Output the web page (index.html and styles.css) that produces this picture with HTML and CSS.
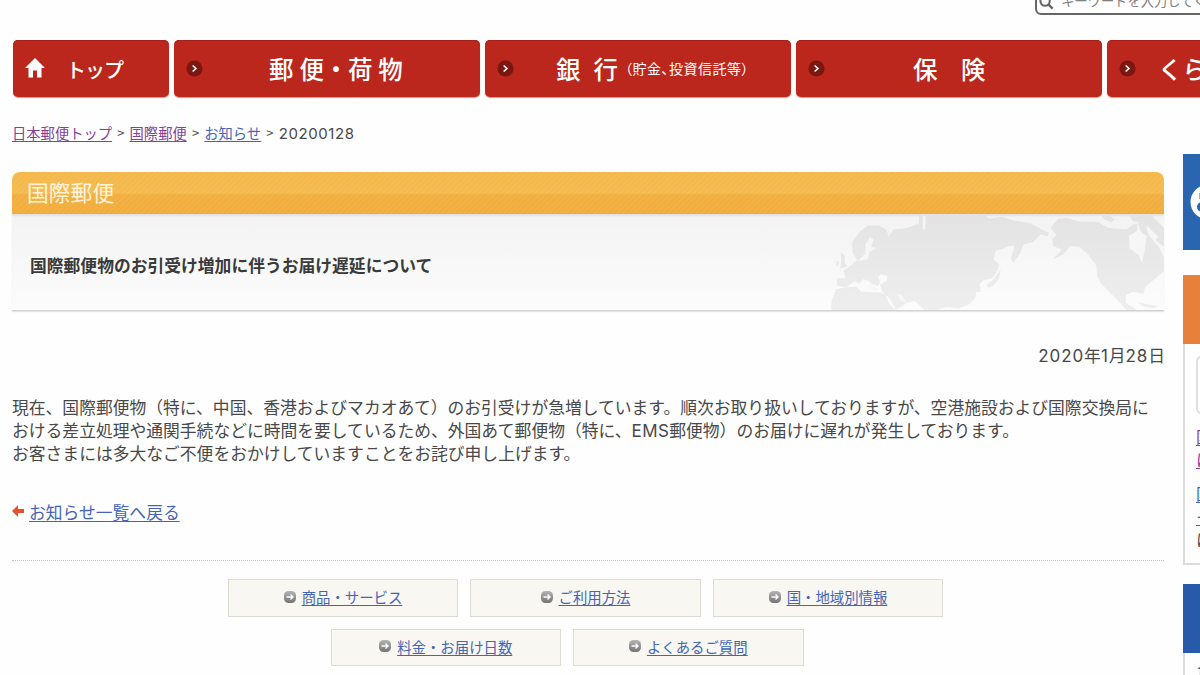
FILE: index.html
```
<!DOCTYPE html>
<html lang="ja">

<head>
    <meta charset="UTF-8">
    <title>国際郵便物のお引受け増加に伴うお届け遅延について</title>
    <link rel="stylesheet" href="styles.css">
</head>

<body>
    <svg class="defs" width="0" height="0">
        <defs>
            <linearGradient id="ball" x1="0" y1="0" x2="0" y2="1">
                <stop offset="0" stop-color="#b4b4b4" />
                <stop offset="1" stop-color="#747474" />
            </linearGradient>
            <linearGradient id="land" gradientUnits="userSpaceOnUse" x1="0" y1="193" x2="0" y2="483">
                <stop offset="0" stop-color="#e3e3e3" />
                <stop offset="1" stop-color="#eeeeee" />
            </linearGradient>
            <symbol id="chevron" viewBox="0 0 18 18">
                <circle cx="9" cy="9" r="8.5" fill="#7b1610" />
                <path d="M7 5.8L10.5 9L7 12.2" fill="none" stroke="#fff" stroke-width="1.7" />
            </symbol>
            <symbol id="arrow" viewBox="0 0 12 12">
                <rect width="12" height="12" rx="4.5" fill="url(#ball)" />
                <path d="M2.5 6H9M6.5 3.5L9 6L6.5 8.5" fill="none" stroke="#fff" stroke-width="1.4" />
            </symbol>
        </defs>
    </svg>

    <header class="header">
        <div class="search">
            <svg class="search-icon" viewBox="0 0 16 16">
                <circle cx="6.5" cy="6.5" r="5" fill="none" stroke="#666" stroke-width="2.2" />
                <path d="M10 10L14.5 14.5" stroke="#666" stroke-width="2.6" />
            </svg>
            <span>キーワードを入力してください</span>
        </div>
    </header>

    <nav class="nav">
        <a class="nav-item nav-home">
            <svg class="home-icon" viewBox="0 0 20 20">
                <path d="M10 0L20 10H16.5V19.5H12V12.5H8V19.5H3.5V10H0Z" fill="#fff" />
            </svg>
            <span>トップ</span>
        </a>
        <a class="nav-item nav-post">
            <svg class="chevron"><use href="#chevron" /></svg>
            <span class="nav-label">郵便・荷物</span>
        </a>
        <a class="nav-item nav-bank">
            <svg class="chevron"><use href="#chevron" /></svg>
            <span class="nav-label">銀行</span>
            <span class="nav-note">（貯金、投資信託等）</span>
        </a>
        <a class="nav-item nav-insurance">
            <svg class="chevron"><use href="#chevron" /></svg>
            <span class="nav-label">保険</span>
        </a>
        <a class="nav-item nav-life">
            <svg class="chevron"><use href="#chevron" /></svg>
            <span class="nav-label">くらし</span>
        </a>
    </nav>

    <div class="container">
        <main class="main">
            <div class="breadcrumb">
                <a class="visited">日本郵便トップ</a><i>&gt;</i><a class="visited">国際郵便</a><i>&gt;</i><a class="link">お知らせ</a><i>&gt;</i><span class="num">20200128</span>
            </div>

            <div class="category">国際郵便</div>
            <div class="title">
                <h1>国際郵便物のお引受け増加に伴うお届け遅延について</h1>
                <svg class="map" viewBox="95 193 997 290" preserveAspectRatio="none">
                    <g fill="url(#land)">
                        <path d="M358 193H550L570 207L605 201L640 212L695 222L722 238L748 250L744 260L722 255L700 278L672 285L662 310L640 342L634 325L645 290L628 290L605 300L588 304L582 330L598 345L594 362L578 386L550 394L540 405L543 428L530 428L528 445L510 465L480 478L440 475L415 483H375L345 455L320 463L290 483L268 445L250 430L242 405L262 396L264 382L245 374L235 385L243 396L235 412L218 404L206 394L190 390L180 402L165 396L140 414L113 410L113 388L138 386L132 364L155 348L172 333L160 310L158 278L180 248L205 228L240 228L262 242L268 262L282 240L320 236L358 222Z" />
                        <path d="M110 420L140 414L172 413L186 428L240 430L258 436L270 465L290 483H95L97 455Z" />
                        <path d="M752 235L775 208L800 205L840 216L895 217L925 235L980 240L1000 225L1030 215L1050 262L1078 295L1092 325V365L1063 390L1035 415L1030 435L1000 428L978 438L978 462L1000 475L1010 483H980L955 455L930 430L905 405L892 380L890 350L865 315L838 292L812 290L790 315L760 330L785 300L760 290L758 268L770 256Z" />
                        <path d="M900 193H925L945 210L935 218L912 208ZM985 193H1050L1092 235V292L1070 275L1055 250L1030 222L1000 215ZM124 308L137 318L136 340L144 352L122 358L126 335ZM112 334L120 338L116 350L110 348ZM603 360L598 388L582 408L566 416L562 405L580 392ZM1015 460L1040 466L1075 472L1060 478L1025 471Z" />
                    </g>
                    <path d="M212 262L222 270L215 293L232 296L210 308L205 330L176 334L198 312L198 285ZM370 197L378 202L377 238L370 238ZM207 400L220 405L236 425L225 428ZM292 435L306 438L324 462L305 456ZM1012 215L1022 245L1040 260L1034 305L1026 340L1016 318L988 295L988 258L1012 244ZM1040 225L1052 240L1075 262L1068 270L1048 252Z" fill="#f6f6f6" />
                </svg>
            </div>

            <p class="date"><span class="latin">2020</span>年<span class="latin">1</span>月<span class="latin">28</span>日</p>

            <p class="text">現在、国際郵便物（特に、中国、香港およびマカオあて）のお引受けが急増しています。順次お取り扱いしておりますが、空港施設および国際交換局に<br>おける差立処理や通関手続などに時間を要しているため、外国あて郵便物（特に、<span class="latin">EMS</span>郵便物）のお届けに遅れが発生しております。<br>お客さまには多大なご不便をおかけしていますことをお詫び申し上げます。</p>

            <div class="back">
                <svg class="back-icon" viewBox="0 0 12 12">
                    <path d="M0 6L6 0V4H12V8H6V12Z" fill="#e9502a" />
                </svg>
                <a class="link">お知らせ一覧へ戻る</a>
            </div>

            <div class="local-nav">
                <div class="local-row">
                    <div class="local-item"><svg><use href="#arrow" /></svg><a class="link">商品・サービス</a></div>
                    <div class="local-item"><svg><use href="#arrow" /></svg><a class="link">ご利用方法</a></div>
                    <div class="local-item"><svg><use href="#arrow" /></svg><a class="link">国・地域別情報</a></div>
                </div>
                <div class="local-row local-row-second">
                    <div class="local-item"><svg><use href="#arrow" /></svg><a class="link">料金・お届け日数</a></div>
                    <div class="local-item"><svg><use href="#arrow" /></svg><a class="link">よくあるご質問</a></div>
                </div>
            </div>
        </main>

        <aside class="side">
            <div class="banner">
                <svg viewBox="0 0 36 36">
                    <circle cx="18" cy="18" r="17.5" fill="#fff" />
                    <path d="M9.5 9H16V15H9.5Z" fill="#2b65b0" />
                    <circle cx="12" cy="23" r="5" fill="#2b65b0" />
                </svg>
            </div>
            <div class="side-box">
                <div class="side-head orange"></div>
                <div class="side-body">
                    <div class="side-button"></div>
                    <p><a class="visited">国<br>に</a></p>
                    <p><a class="link">国<br>そ</a><br>に</p>
                </div>
            </div>
            <div class="side-box">
                <div class="side-head blue"></div>
                <div class="side-body side-next">1</div>
            </div>
        </aside>
    </div>
</body>

</html>
```
FILE: styles.css
```
* {
    box-sizing: border-box;
}

body {
    width: 1200px;
    height: 675px;
    margin: 0;
    overflow: hidden;
    background-color: #fefefe;
    color: #484848;
    font-family: "Noto Sans CJK JP", sans-serif;
    font-weight: 400;
}

.defs {
    display: block;
}

.header {
    display: flex;
    justify-content: flex-end;
    height: 40px;
    overflow: hidden;
}

.search {
    display: flex;
    flex-shrink: 0;
    align-items: center;
    gap: 7px;
    width: 260px;
    height: 30px;
    margin-top: -15px;
    margin-right: -95px;
    padding-left: 2px;
    border: 2px solid #666;
    border-radius: 6px;
    color: #808080;
    font-size: 13.3px;
    white-space: nowrap;
}

.search-icon {
    width: 15px;
    height: 15px;
    margin-top: 4px;
}

.nav {
    display: flex;
    gap: 5px;
    padding-left: 13px;
}

.nav-item {
    display: flex;
    flex-shrink: 0;
    align-items: center;
    width: 306px;
    height: 57px;
    padding-left: 12px;
    border-radius: 5px;
    background-color: #bb271c;
    box-shadow: 0 1px 1px #d89490, inset 0 1px #a8201a;
    color: #fff;
    font-weight: 500;
    white-space: nowrap;
}

.nav-home {
    width: 156px;
    gap: 21px;
    font-size: 20px;
    letter-spacing: -1px;
}

.nav-home span {
    padding-top: 2px;
}

.home-icon {
    width: 20px;
    height: 20px;
    margin-top: -1px;
}

.chevron {
    width: 17px;
    height: 17px;
}

.nav-label {
    padding-bottom: 1px;
    font-size: 24.5px;
}

.nav-post .nav-label {
    margin-left: 66px;
    letter-spacing: 5.9px;
    font-feature-settings: "palt";
}

.nav-bank .nav-label {
    margin-left: 42px;
    letter-spacing: 13px;
}

.nav-note {
    margin-left: -6px;
    padding-bottom: 1px;
    font-size: 14px;
    font-weight: 400;
    letter-spacing: 0.5px;
    font-feature-settings: "palt";
}

.nav-insurance .nav-label {
    margin-left: 88px;
    letter-spacing: 23.5px;
}

.nav-life .nav-label {
    margin-left: 22px;
}

.container {
    display: flex;
    padding-left: 12px;
}

.main {
    flex-shrink: 0;
    width: 1152px;
    margin-right: 19px;
}

.breadcrumb {
    display: flex;
    height: 75px;
    padding-top: 26px;
    font-size: 14.3px;
    line-height: 20px;
}

.breadcrumb i {
    width: 17.5px;
    font-size: 13px;
    font-style: normal;
    text-align: center;
}

.num {
    padding-top: 1px;
    font-family: Inter, "Noto Sans CJK JP", sans-serif;
    font-size: 15px;
    letter-spacing: 0.6px;
}

.link,
.visited {
    color: #4565b4;
    text-decoration: underline;
    text-decoration-thickness: 1px;
    text-underline-offset: 2px;
}

.visited {
    color: #86409a;
}

.category {
    height: 42px;
    padding-left: 15px;
    border-radius: 8px 8px 0 0;
    background-image: repeating-linear-gradient(135deg, rgba(255, 255, 255, 0.04) 0 2px, transparent 2px 4px), linear-gradient(#f4b84a, #f4ba4e 50%, #f1af40 54%, #f2ac3c);
    color: #fff3da;
    font-size: 21.8px;
    line-height: 40px;
}

.title {
    display: flex;
    align-items: center;
    justify-content: space-between;
    height: 97px;
    border-bottom: 1px solid #d2d2d2;
    background-image: linear-gradient(#dcdcdc, #f3f3f3 3px, #fcfcfc);
    box-shadow: 0 1px 1px #e6e6e6;
}

.title h1 {
    margin: 5px 0 0 18px;
    color: #3a3a3a;
    font-size: 16.8px;
    font-weight: 600;
}

.map {
    align-self: stretch;
    width: 333px;
    height: 96px;
}

.date {
    margin: 31px -1px 0 0;
    font-size: 16.8px;
    line-height: 26px;
    text-align: right;
}

.date .latin {
    letter-spacing: 0.9px;
}

.text {
    margin: 28px 0 0;
    font-size: 16.8px;
    line-height: 23px;
    white-space: nowrap;
}

.latin {
    font-family: Inter, "Noto Sans CJK JP", sans-serif;
    font-size: 17px;
    line-height: 1;
    letter-spacing: 0.4px;
}

.back {
    display: flex;
    align-items: center;
    gap: 5px;
    margin-top: 34px;
    font-size: 16.8px;
    line-height: 26px;
}

.back-icon {
    width: 12px;
    height: 12px;
    margin-top: -2px;
}

.local-nav {
    display: flex;
    flex-direction: column;
    gap: 12px;
    margin-top: 35px;
    padding-top: 18px;
    border-top: 1px dotted #c4c4c4;
}

.local-row {
    display: flex;
    justify-content: center;
    gap: 12px;
    margin-right: 5px;
}

.local-row-second {
    margin-right: 42px;
}

.local-item {
    display: flex;
    align-items: center;
    justify-content: center;
    gap: 6px;
    width: 230.5px;
    height: 37.5px;
    padding-bottom: 2px;
    border: 1px solid #dcdcd6;
    background-color: #f8f7f2;
    font-size: 14.4px;
}

.local-item svg {
    width: 12px;
    height: 12px;
}

.side {
    flex-shrink: 0;
    width: 260px;
    padding-top: 57px;
}

.banner {
    display: flex;
    align-items: center;
    height: 96px;
    padding-left: 7px;
    background-color: #2b65b0;
}

.banner svg {
    width: 36px;
    height: 36px;
}

.side-box {
    margin-top: 25px;
}

.side-box + .side-box {
    margin-top: 19px;
}

.side-head {
    height: 69px;
}

.orange {
    background-color: #e6803a;
}

.blue {
    background-color: #275baa;
}

.side-body {
    height: 221px;
    padding: 12px 0 0 11px;
    border: 2px solid #dcdcdc;
    border-top: none;
    font-size: 16px;
    line-height: 23px;
}

.side-button {
    height: 58px;
    border: 2px solid #e0e0e0;
    border-radius: 5px;
}

.side-body p {
    margin: 11px 0;
}

.side-next {
    padding-top: 8px;
}
```
